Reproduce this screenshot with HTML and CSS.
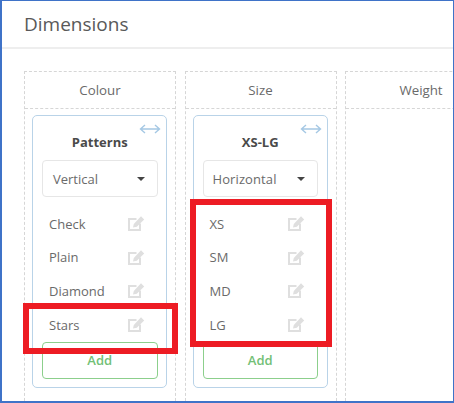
FILE: index.html
```html
<!DOCTYPE html>
<html lang="en">
<head>
<meta charset="utf-8">
<title>Dimensions</title>
<link rel="stylesheet" href="styles.css">
</head>
<body>
<svg class="defs" width="0" height="0" aria-hidden="true">
  <symbol id="edit" viewBox="0 0 18 17">
    <path d="M13 8.5V15H2V4H9.5" fill="none" stroke="currentColor" stroke-width="2"/>
    <path d="M6 12.5L6.8 9L14 1.2L17.2 4.4L9.8 11.7Z" fill="currentColor"/>
  </symbol>
  <symbol id="swap" viewBox="0 0 22 10">
    <path d="M1.5 5H20.5M6 1L1.5 5L6 9M16 1L20.5 5L16 9" fill="none" stroke="currentColor" stroke-width="1.4"/>
  </symbol>
</svg>
<main class="window">
  <h1 class="title">Dimensions</h1>
  <div class="columns">
    <section class="column">
      <div class="column-head">Colour</div>
      <div class="column-body">
        <div class="card">
          <svg class="swap"><use href="#swap"/></svg>
          <h2 class="card-title">Patterns</h2>
          <div class="select"><span>Vertical</span><i class="caret"></i></div>
          <ul class="items">
            <li class="item"><span>Check</span><svg class="edit"><use href="#edit"/></svg></li>
            <li class="item"><span>Plain</span><svg class="edit"><use href="#edit"/></svg></li>
            <li class="item"><span>Diamond</span><svg class="edit"><use href="#edit"/></svg></li>
            <li class="item"><span>Stars</span><svg class="edit"><use href="#edit"/></svg></li>
          </ul>
          <div class="add">Add</div>
        </div>
      </div>
    </section>
    <section class="column">
      <div class="column-head">Size</div>
      <div class="column-body">
        <div class="card">
          <svg class="swap"><use href="#swap"/></svg>
          <h2 class="card-title">XS-LG</h2>
          <div class="select select-wide"><span>Horizontal</span><i class="caret"></i></div>
          <ul class="items">
            <li class="item"><span>XS</span><svg class="edit"><use href="#edit"/></svg></li>
            <li class="item"><span>SM</span><svg class="edit"><use href="#edit"/></svg></li>
            <li class="item"><span>MD</span><svg class="edit"><use href="#edit"/></svg></li>
            <li class="item"><span>LG</span><svg class="edit"><use href="#edit"/></svg></li>
          </ul>
          <div class="add">Add</div>
        </div>
      </div>
    </section>
    <section class="column">
      <div class="column-head">Weight</div>
      <div class="column-body"></div>
    </section>
  </div>
  <div class="mark mark-one"></div>
  <div class="mark mark-two"></div>
</main>
</body>
</html>
```
FILE: styles.css
```css
* { box-sizing: border-box; }
html, body { margin: 0; height: 100%; }
body {
  background: #fff;
  overflow: hidden;
  font-family: "Open Sans", sans-serif;
  color: #555;
}
.defs { position: absolute; }
.window {
  position: relative;
  width: 454px;
  height: 403px;
  overflow: hidden;
  border-style: solid;
  border-color: #3f73c8;
  border-width: 1px 1px 2px 2px;
}
.title {
  margin: 0;
  height: 48px;
  padding: 9px 0 0 22px;
  font-size: 19px;
  line-height: 28px;
  font-weight: 400;
  color: #595959;
  border-bottom: 2px solid #eeeeee;
}
.columns {
  display: flex;
  gap: 8.5px;
  padding: 22px 0 0 22px;
}
.column {
  flex: 0 0 152px;
  height: 340px;
  border-width: 1px;
  border-style: dashed;
  border-color: #d6d6d6;
}
.column-head {
  height: 37px;
  font-size: 13.3px;
  line-height: 36px;
  text-align: center;
  color: #6a6a6a;
  border-bottom: 1px dashed #d6d6d6;
}
.column-body { padding: 6px 7px 0; }
.card {
  position: relative;
  width: 135px;
  height: 273px;
  padding: 0 8.5px 0 9px;
  border: 1.5px solid #b9d3e8;
  border-radius: 5px;
}
.swap {
  position: absolute;
  top: 8px;
  right: 5px;
  width: 22px;
  height: 10px;
  color: #a5c8e4;
}
.card-title {
  margin: 0;
  padding-top: 16px;
  height: 44px;
  font-size: 13px;
  line-height: 20px;
  font-weight: 700;
  text-align: center;
  color: #4a4a4a;
}
.select {
  display: flex;
  justify-content: space-between;
  align-items: center;
  height: 37px;
  padding: 0 12px 0 10px;
  border: 1px solid #e6e6e6;
  border-radius: 4px;
  font-size: 13px;
  color: #6a6a6a;
}
.select-wide { padding-left: 9px; letter-spacing: 0.1px; }
.caret {
  width: 0;
  height: 0;
  border: 4px solid transparent;
  border-top-color: #444;
  border-bottom: 0;
}
.items {
  list-style: none;
  margin: 0;
  padding: 10px 0 0;
}
.item {
  display: flex;
  justify-content: space-between;
  align-items: center;
  height: 33.6px;
  padding: 0 13px 0 7px;
  font-size: 13px;
  color: #6a6a6a;
}
.edit {
  width: 18px;
  height: 17px;
  color: #dfdfdf;
}
.add {
  height: 37px;
  margin-top: 1px;
  border: 1.5px solid #8ccf8c;
  border-radius: 4px;
  font-size: 13px;
  font-weight: 600;
  line-height: 34px;
  text-align: center;
  color: #72c076;
}
.mark {
  position: absolute;
  border: 6px solid #ed1c24;
}
.mark-one { left: 21px; top: 302px; width: 155px; height: 51px; }
.mark-two { left: 188px; top: 198px; width: 142px; height: 148px; }
```
